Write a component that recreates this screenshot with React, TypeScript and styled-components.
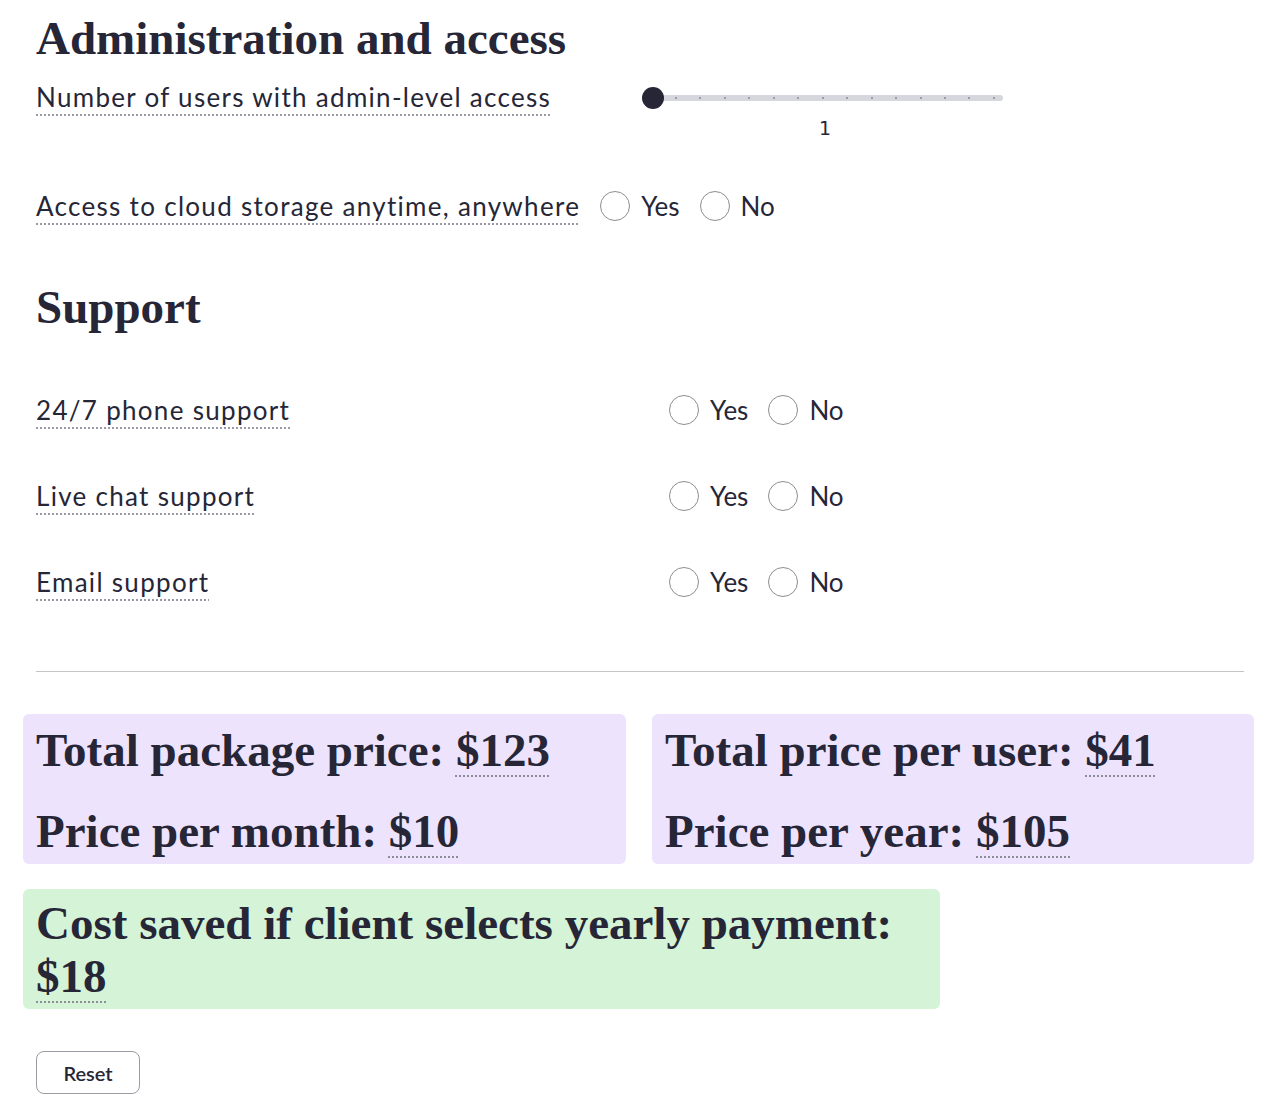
import styled, {createGlobalStyle} from "styled-components";

const GlobalStyle = createGlobalStyle`
    body {
        margin: 0;
        background: #ffffff;
        color: #262637;
        font-family: "Lato", "Noto Sans", sans-serif;
    }
`;

const Page = styled.main`
    padding: 12px 36px 0 36px;
    width: 1208px;
    display: flex;
    flex-direction: column;
`;

const SectionTitle = styled.h2<{$top?: number}>`
    font-family: "Liberation Serif", serif;
    font-weight: 700;
    font-size: 47px;
    line-height: 52px;
    margin: ${(p) => p.$top ?? 0}px 0 0 0;
`;

const HelpLabel = styled.span`
    font-size: 26px;
    line-height: 34px;
    letter-spacing: 1.3px;
    text-decoration: underline dotted #9a9aa6;
    text-decoration-thickness: 2px;
    text-underline-offset: 7px;
`;

const SliderRow = styled.div`
    display: grid;
    grid-template-columns: 606px 361px;
    margin-top: 16px;
    height: 109px;
`;

const Slider = styled.div`
    position: relative;
    height: 70px;
`;

const Track = styled.div`
    margin-top: 15px;
    margin-left: 11px;
    height: 6px;
    border-radius: 3px;
    background: #d6d6dd;
    display: flex;
    justify-content: space-between;
    align-items: center;
    padding: 0 8px 0 22px;
`;

const Tick = styled.span`
    width: 2px;
    height: 2px;
    border-radius: 1px;
    background: #8a8a94;
`;

const Thumb = styled.div`
    position: absolute;
    left: 0;
    top: 7px;
    width: 22px;
    height: 22px;
    border-radius: 50%;
    background: #262637;
`;

const SliderValue = styled.div`
    text-align: center;
    font-family: "DejaVu Sans", sans-serif;
    font-size: 19px;
    margin-top: 16px;
    padding-left: 5px;
`;

const InlineRow = styled.div`
    display: flex;
    align-items: center;
    gap: 20px;
`;

const SupportRow = styled.div<{$first?: boolean}>`
    display: grid;
    grid-template-columns: 633px auto;
    align-items: center;
    margin-top: ${(p) => (p.$first ? 60 : 52)}px;
`;

const RadioGroup = styled.div`
    display: flex;
    align-items: center;
    gap: 20px;
`;

const RadioOption = styled.label`
    display: flex;
    align-items: center;
    gap: 11px;
    font-size: 26px;
    line-height: 34px;
`;

const RadioCircle = styled.span`
    width: 28px;
    height: 28px;
    border-radius: 50%;
    border: 1.5px solid #8d8d92;
    background: #ffffff;
`;

const Divider = styled.hr`
    border: none;
    border-top: 1.5px solid #c4c4c8;
    margin: 72px 0 42px 0;
`;

const SummaryGrid = styled.div`
    display: grid;
    grid-template-columns: 603px 602px;
    gap: 26px;
    margin: 0 0 0 -13px;
`;

const SummaryBox = styled.div<{$tone: "purple" | "green"}>`
    background: ${(p) => (p.$tone === "purple" ? "#ede3fd" : "#d5f3d6")};
    border-radius: 6px;
    padding: 10px 12px 6px 13px;
    font-family: "Liberation Serif", serif;
    font-weight: 700;
    font-size: 47px;
    line-height: 53px;
    display: flex;
    flex-direction: column;
    gap: 28px;
`;

const SavedBox = styled(SummaryBox)`
    width: 892px;
    margin: 25px 0 0 -13px;
    padding-top: 8px;
    display: block;
`;

const Amount = styled.span`
    text-decoration: underline dotted #8d8d99;
    text-decoration-thickness: 2px;
    text-underline-offset: 9px;
`;

const ResetButton = styled.button`
    align-self: flex-start;
    margin-top: 42px;
    width: 104px;
    height: 43px;
    border: 1px solid #9c9ca4;
    border-radius: 8px;
    background: #ffffff;
    color: #262637;
    font-family: "Lato", sans-serif;
    font-weight: 600;
    font-size: 20px;
`;

function YesNo() {
    return (
        <RadioGroup>
            <RadioOption>
                <RadioCircle />
                Yes
            </RadioOption>
            <RadioOption>
                <RadioCircle />
                No
            </RadioOption>
        </RadioGroup>
    );
}

const supportItems = ["24/7 phone support", "Live chat support", "Email support"];

export default function App() {
    return (
        <Page>
            <GlobalStyle />
            <SectionTitle>Administration and access</SectionTitle>
            <SliderRow>
                <div>
                    <HelpLabel>Number of users with admin-level access</HelpLabel>
                </div>
                <Slider>
                    <Track>
                        {Array.from({length: 14}).map((_, i) => (
                            <Tick key={i} />
                        ))}
                    </Track>
                    <Thumb />
                    <SliderValue>1</SliderValue>
                </Slider>
            </SliderRow>
            <InlineRow>
                <HelpLabel>Access to cloud storage anytime, anywhere</HelpLabel>
                <YesNo />
            </InlineRow>

            <SectionTitle $top={58}>Support</SectionTitle>
            {supportItems.map((item, i) => (
                <SupportRow key={item} $first={i === 0}>
                    <div>
                        <HelpLabel>{item}</HelpLabel>
                    </div>
                    <YesNo />
                </SupportRow>
            ))}

            <Divider />

            <SummaryGrid>
                <SummaryBox $tone="purple">
                    <div>
                        Total package price: <Amount>$123</Amount>
                    </div>
                    <div>
                        Price per month: <Amount>$10</Amount>
                    </div>
                </SummaryBox>
                <SummaryBox $tone="purple">
                    <div>
                        Total price per user: <Amount>$41</Amount>
                    </div>
                    <div>
                        Price per year: <Amount>$105</Amount>
                    </div>
                </SummaryBox>
            </SummaryGrid>
            <SavedBox $tone="green">
                Cost saved if client selects yearly payment: <Amount>$18</Amount>
            </SavedBox>

            <ResetButton>Reset</ResetButton>
        </Page>
    );
}
